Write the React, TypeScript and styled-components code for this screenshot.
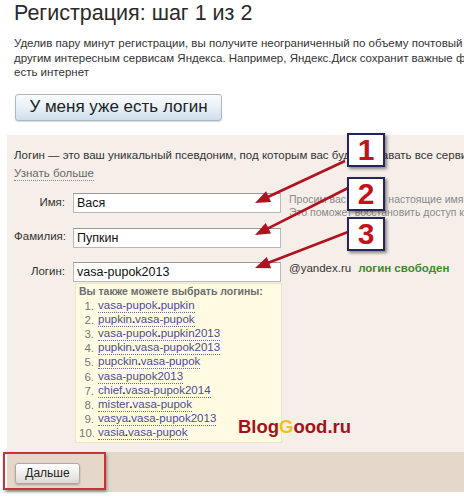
import React from "react";
import styled, { createGlobalStyle } from "styled-components";

const Global = createGlobalStyle`
  html, body { margin: 0; padding: 0; background: #fff; }
  body { width: 464px; height: 500px; overflow: hidden; font-family: Arial, "Liberation Sans", sans-serif; color: #333; }
`;

const Page = styled.div`
  position: relative;
  width: 464px;
  height: 500px;
  overflow: hidden;
`;

const Title = styled.h1`
  margin: 0;
  padding: 0 0 0 14px;
  font-size: 21.5px;
  line-height: 26px;
  font-weight: normal;
  color: #2a2a2a;
`;

const Intro = styled.div`
  padding: 10px 0 0 14px;
  font-size: 11.5px;
  line-height: 14.5px;
  color: #333;
`;

const Line = styled.div`
  white-space: nowrap;
`;

const LoginButton = styled.button`
  display: block;
  margin: 14px 0 0 15px;
  width: 207px;
  height: 27px;
  padding: 0;
  border: 1px solid #a9b7c4;
  border-radius: 3px;
  background: linear-gradient(#fafcfe, #e8f0f7 50%, #cddeec);
  box-shadow: 0 1px 1px rgba(0,0,0,0.15);
  font-family: Arial, "Liberation Sans", sans-serif;
  font-size: 17px;
  color: #222;
`;

const Panel = styled.div`
  margin: 14px 0 0 7px;
  background: #f6efe9;
  padding: 13px 0 0 7px;
  height: 317px;
  box-sizing: border-box;
`;

const Note = styled.div`
  white-space: nowrap;
  font-size: 11.5px;
  line-height: 15px;
  color: #333;
`;

const More = styled.span`
  display: inline-block;
  margin-top: 2px;
  font-size: 11.5px;
  line-height: 14px;
  color: #666;
  border-bottom: 1px dotted #888;
`;

const Form = styled.div`
  display: grid;
  grid-template-columns: 51px 208px auto;
  column-gap: 8px;
  margin-top: 12px;
`;

const Label = styled.div<{ $top: number }>`
  text-align: right;
  font-size: 11.5px;
  color: #333;
  padding-top: ${(p) => p.$top}px;
  white-space: nowrap;
`;

const Field = styled.div<{ $gap: number }>`
  padding-top: ${(p) => p.$gap}px;
`;

const Input = styled.div`
  height: 20px;
  box-sizing: border-box;
  border: 1px solid #b8b8b8;
  border-top-color: #999;
  background: #fff;
  font-size: 12.5px;
  line-height: 18px;
  padding-left: 3px;
  color: #111;
`;

const Hint = styled.div<{ $gap: number }>`
  padding-top: ${(p) => p.$gap}px;
  font-size: 10.5px;
  line-height: 13px;
  color: #8a8a8a;
  white-space: nowrap;
`;

const Domain = styled.div<{ $gap: number }>`
  padding-top: ${(p) => p.$gap}px;
  font-size: 11.5px;
  color: #333;
  white-space: nowrap;
`;

const Free = styled.span`
  margin-left: 7px;
  font-weight: bold;
  color: #3b8a2e;
`;

const Suggest = styled.div`
  margin-left: 2px;
  margin-top: 1px;
  width: 207px;
  height: 160px;
  box-sizing: border-box;
  background: #fffbe3;
  border: 1px solid #efe5c2;
  padding: 0 0 0 3px;
  font-size: 11.5px;
`;

const SuggestHead = styled.div`
  font-size: 10.5px;
  font-weight: bold;
  color: #6c6c6c;
  line-height: 15px;
  white-space: nowrap;
`;

const List = styled.ol`
  margin: 0;
  padding: 0;
  list-style: none;
`;

const Item = styled.li`
  display: flex;
  line-height: 14.2px;
  white-space: nowrap;
`;

const Num = styled.span`
  width: 15px;
  text-align: right;
  color: #777;
  margin-right: 4px;
`;

const Link = styled.span`
  color: #4b4b95;
  border-bottom: 1px dotted #6a6a8a;
  line-height: 13px;
  align-self: flex-start;
`;

const Dot = styled.b`
  color: #333;
`;

const Footer = styled.div`
  margin-left: 7px;
  height: 40px;
  background: #e6d7cb;
  padding: 11px 0 0 8px;
  box-sizing: border-box;
`;

const NextButton = styled.button`
  width: 65px;
  height: 21px;
  padding: 0;
  border: 1px solid #b0aaa5;
  border-radius: 3px;
  background: linear-gradient(#ffffff, #f0eeec 50%, #dcd8d4);
  box-shadow: 0 1px 2px rgba(0,0,0,0.25);
  font-family: Arial, "Liberation Sans", sans-serif;
  font-size: 12px;
  color: #222;
`;

const Highlight = styled.div`
  position: absolute;
  left: 3px;
  top: 452px;
  width: 103px;
  height: 38px;
  box-sizing: border-box;
  border: 2px solid #c8313a;
  box-shadow: 1px 2px 3px rgba(0,0,0,0.35);
`;

const Watermark = styled.div`
  position: absolute;
  left: 238px;
  top: 416px;
  font-size: 18.5px;
  font-weight: bold;
  color: #a3121a;
`;

const Yellow = styled.span`
  color: #f2c21a;
`;

const Marker = styled.div<{ $top: number }>`
  position: absolute;
  left: 347px;
  top: ${(p) => p.$top}px;
  width: 38px;
  height: 34px;
  box-sizing: border-box;
  background: #fff;
  border: 2px solid #24245e;
  box-shadow: 2px 2px 3px rgba(0,0,0,0.45);
  display: flex;
  align-items: center;
  justify-content: center;
  font-size: 30px;
  font-weight: bold;
  color: #c4121d;
`;

const Arrows = styled.svg`
  position: absolute;
  left: 0;
  top: 0;
  pointer-events: none;
`;

const suggestions: [string, string][] = [
  ["vasa-pupok", "pupkin"],
  ["pupkin", "vasa-pupok"],
  ["vasa-pupok", "pupkin2013"],
  ["pupkin", "vasa-pupok2013"],
  ["pupckin", "vasa-pupok"],
  ["vasa-pupok2013", ""],
  ["chief", "vasa-pupok2014"],
  ["mister", "vasa-pupok"],
  ["vasya", "vasa-pupok2013"],
  ["vasia", "vasa-pupok"],
];

const arrows = [
  { x1: 345, y1: 161, x2: 255, y2: 203 },
  { x1: 348, y1: 188, x2: 255, y2: 235 },
  { x1: 348, y1: 232, x2: 255, y2: 268 },
];

function Arrow({ x1, y1, x2, y2 }: { x1: number; y1: number; x2: number; y2: number }) {
  const dx = x2 - x1;
  const dy = y2 - y1;
  const len = Math.hypot(dx, dy);
  const ux = dx / len;
  const uy = dy / len;
  const hl = 15;
  const hw = 6;
  const bx = x2 - ux * hl;
  const by = y2 - uy * hl;
  const px = -uy;
  const py = ux;
  const pts = `${x2},${y2} ${bx + px * hw},${by + py * hw} ${bx - px * hw},${by - py * hw}`;
  return (
    <g>
      <line x1={x1} y1={y1} x2={bx + ux * 2} y2={by + uy * 2} stroke="#b0121f" strokeWidth={2.6} />
      <polygon points={pts} fill="#b0121f" />
    </g>
  );
}

export default function App() {
  return (
    <>
      <Global />
      <Page>
        <Title>Регистрация: шаг 1 из 2</Title>
        <Intro>
          <Line>Уделив пару минут регистрации, вы получите неограниченный по объему почтовый ящик и доступ ко всем</Line>
          <Line>другим интересным сервисам Яндекса. Например, Яндекс.Диск сохранит важные файлы и они будут доступны</Line>
          <Line>есть интернет</Line>
        </Intro>
        <LoginButton>У меня уже есть логин</LoginButton>
        <Panel>
          <Note>Логин — это ваш уникальный псевдоним, под которым вас будут узнавать все сервисы Яндекса</Note>
          <More>Узнать больше</More>
          <Form>
            <Label $top={3}>Имя:</Label>
            <Field $gap={0}>
              <Input>Вася</Input>
            </Field>
            <Hint $gap={0}>
              Просим вас указать настоящие имя и фамилию.
              <br />
              Это поможет восстановить доступ к аккаунту.
            </Hint>
            <Label $top={11}>Фамилия:</Label>
            <Field $gap={9}>
              <Input>Пупкин</Input>
            </Field>
            <div />
            <Label $top={17}>Логин:</Label>
            <Field $gap={14}>
              <Input>vasa-pupok2013</Input>
              <Suggest>
                <SuggestHead>Вы также можете выбрать логины:</SuggestHead>
                <List>
                  {suggestions.map(([a, b], i) => (
                    <Item key={i}>
                      <Num>{i + 1}.</Num>
                      <Link>
                        {a}
                        {b && (
                          <>
                            <Dot>.</Dot>
                            {b}
                          </>
                        )}
                      </Link>
                    </Item>
                  ))}
                </List>
              </Suggest>
            </Field>
            <Domain $gap={14}>
              @yandex.ru<Free>логин свободен</Free>
            </Domain>
          </Form>
        </Panel>
        <Footer>
          <NextButton>Дальше</NextButton>
        </Footer>
        <Watermark>
          Blog<Yellow>G</Yellow>ood.ru
        </Watermark>
        <Highlight />
        <Arrows width={464} height={500}>
          {arrows.map((a, i) => (
            <Arrow key={i} {...a} />
          ))}
        </Arrows>
        <Marker $top={133}>1</Marker>
        <Marker $top={177}>2</Marker>
        <Marker $top={217}>3</Marker>
      </Page>
    </>
  );
}
